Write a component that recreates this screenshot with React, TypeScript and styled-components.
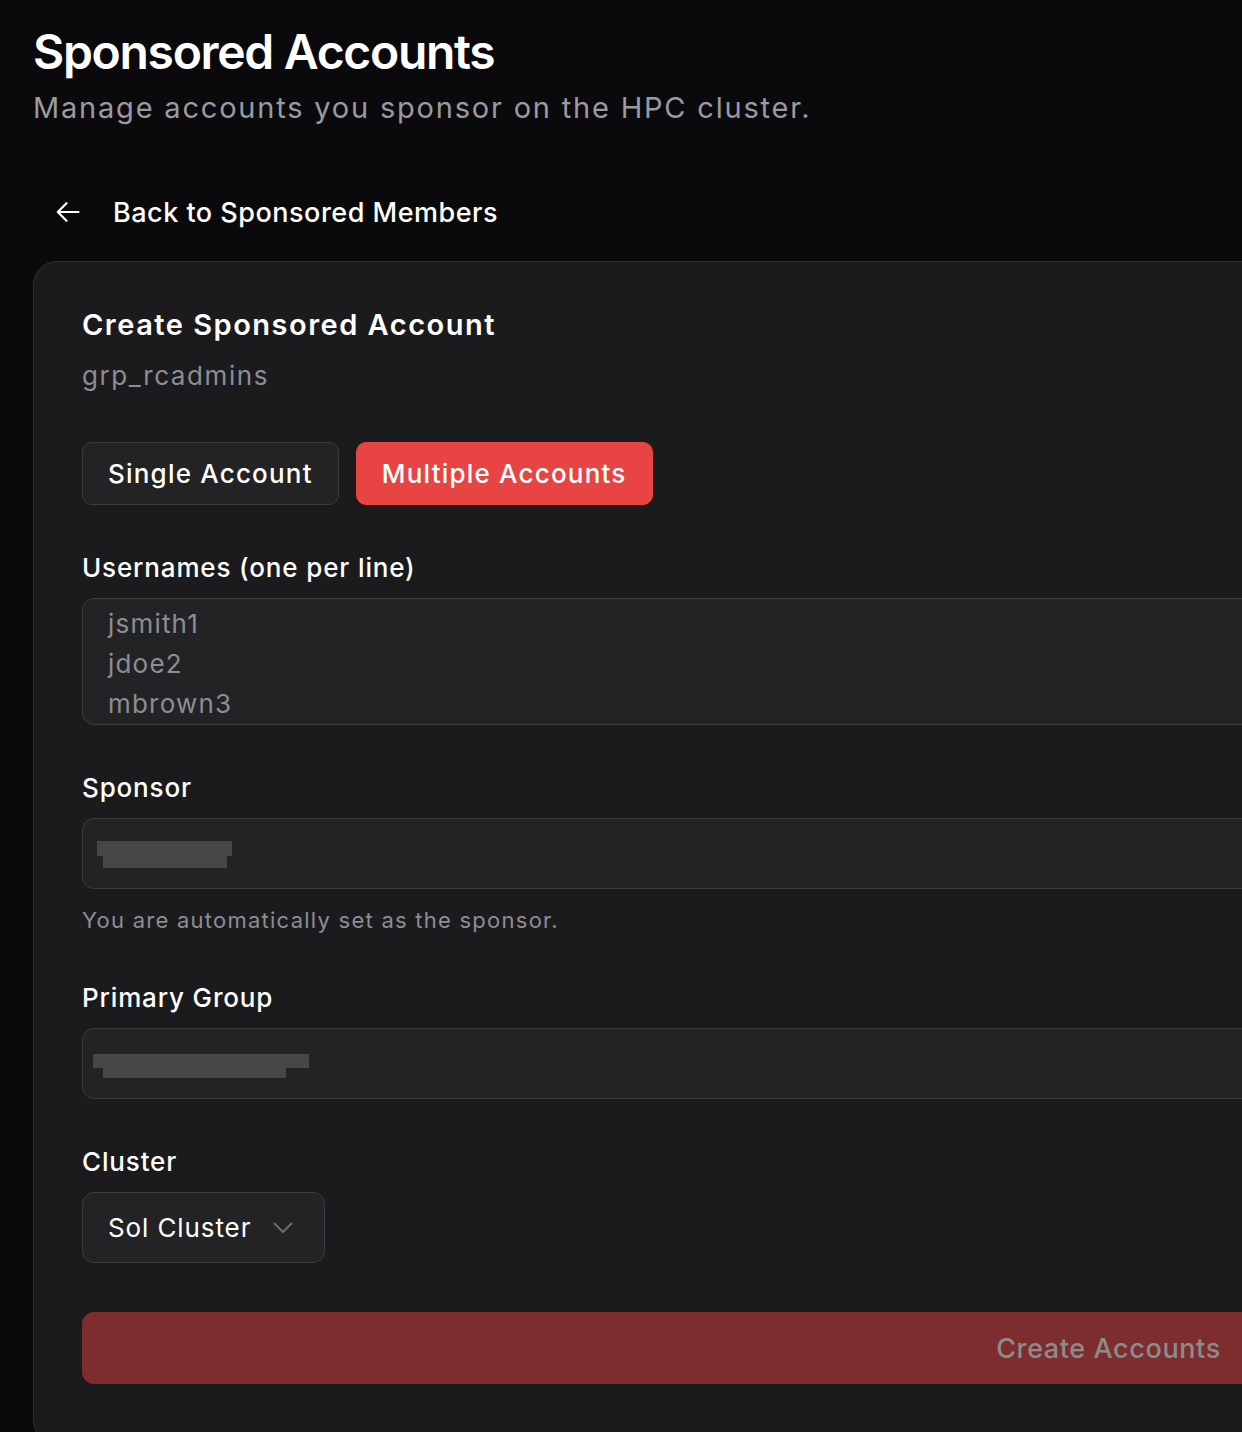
import React from "react";
import styled, { createGlobalStyle } from "styled-components";

const GlobalStyle = createGlobalStyle`
  html, body {
    margin: 0;
    padding: 0;
    background: #0a0a0c;
    overflow: hidden;
  }
  body {
    font-family: Inter, "Noto Sans", "Liberation Sans", sans-serif;
    color: #f4f4f5;
  }
  * { box-sizing: border-box; }
`;

const Page = styled.div`
  width: 2217px;
  min-height: 1432px;
  padding: 23px 33px 40px;
  display: flex;
  flex-direction: column;
`;

const Title = styled.h1`
  margin: 0;
  font-size: 48px;
  line-height: 58px;
  font-weight: 600;
  letter-spacing: -1.3px;
  color: #ffffff;
`;

const Subtitle = styled.p`
  margin: 8px 0 0;
  font-size: 29px;
  line-height: 38px;
  font-weight: 400;
  letter-spacing: 1.8px;
  color: #9a9aa0;
`;

const BackLink = styled.a`
  margin: 67px 0 0 23px;
  display: flex;
  align-items: center;
  gap: 33px;
  height: 36px;
  font-size: 27px;
  font-weight: 500;
  letter-spacing: 0.5px;
  color: #ffffff;
  text-decoration: none;
  cursor: pointer;
`;

const Card = styled.section`
  margin-top: 31px;
  background: #1b1b1e;
  border: 1px solid #2e2e31;
  border-radius: 24px;
  padding: 45px 48px 60px;
  display: flex;
  flex-direction: column;
`;

const CardTitle = styled.h2`
  margin: 0;
  font-size: 29px;
  line-height: 35px;
  font-weight: 600;
  letter-spacing: 1.5px;
  color: #ffffff;
`;

const CardSub = styled.p`
  margin: 16px 0 0;
  font-size: 26px;
  line-height: 36px;
  letter-spacing: 1.6px;
  color: #8d8d93;
`;

const ToggleRow = styled.div`
  margin-top: 48px;
  display: flex;
  gap: 17px;
`;

const ToggleButton = styled.button<{ $active?: boolean }>`
  height: 63px;
  padding: 0 25px;
  border-radius: 10px;
  font-family: inherit;
  font-size: 26px;
  font-weight: 500;
  letter-spacing: 1.2px;
  cursor: pointer;
  color: #ffffff;
  background: ${(p) => (p.$active ? "#e84443" : "#232326")};
  border: 1.5px solid ${(p) => (p.$active ? "#e84443" : "#3c3c40")};
`;

const Field = styled.div<{ $top?: number }>`
  margin-top: ${(p) => p.$top ?? 45}px;
  display: flex;
  flex-direction: column;
`;

const Label = styled.label`
  font-size: 26px;
  line-height: 36px;
  font-weight: 500;
  letter-spacing: 0.85px;
  color: #ffffff;
  margin-bottom: 12px;
`;

const TextArea = styled.textarea`
  height: 127px;
  padding: 5px 25px 0;
  border-radius: 12px;
  border: 1.5px solid #3c3c40;
  background: #232326;
  color: #ffffff;
  font-family: inherit;
  font-size: 26px;
  line-height: 40px;
  letter-spacing: 1.2px;
  resize: none;
  overflow: hidden;
  outline: none;
  &::placeholder {
    color: #8d8d93;
  }
`;

const InputBox = styled.div<{ $padTop: number; $padLeft: number }>`
  height: 71px;
  border-radius: 12px;
  border: 1.5px solid #3c3c40;
  background: #232326;
  padding: ${(p) => `${p.$padTop}px 0 0 ${p.$padLeft}px`};
  display: flex;
  flex-direction: column;
  align-items: flex-start;
`;

const RedactBar = styled.div<{ $w: number; $h: number; $indent?: number }>`
  width: ${(p) => p.$w}px;
  height: ${(p) => p.$h}px;
  margin-left: ${(p) => p.$indent ?? 0}px;
  background: #474749;
`;

const Helper = styled.p`
  margin: 16px 0 0;
  font-size: 22px;
  line-height: 30px;
  letter-spacing: 1.25px;
  color: #8d8d93;
`;

const Select = styled.button`
  align-self: flex-start;
  width: 243px;
  height: 71px;
  padding: 0 31px 0 25px;
  border-radius: 12px;
  border: 1.5px solid #3c3c40;
  background: #232326;
  color: #ffffff;
  font-family: inherit;
  font-size: 26px;
  letter-spacing: 0.9px;
  display: flex;
  align-items: center;
  justify-content: space-between;
  cursor: pointer;
`;

const SubmitButton = styled.button`
  margin-top: 49px;
  height: 72px;
  width: 100%;
  border: none;
  border-radius: 12px;
  background: #7e2d2f;
  color: #8c8c8c;
  font-family: inherit;
  font-size: 27px;
  font-weight: 500;
  letter-spacing: 0.6px;
  cursor: not-allowed;
`;

export default function App() {
  return (
    <>
      <GlobalStyle />
      <Page>
        <Title>Sponsored Accounts</Title>
        <Subtitle>Manage accounts you sponsor on the HPC cluster.</Subtitle>
        <BackLink>
          <svg width="24" height="22" viewBox="0 0 24 22" fill="none">
            <path
              d="M22.5 11H1.8M10.5 2.2 1.8 11l8.7 8.8"
              stroke="#ffffff"
              strokeWidth="2.2"
              strokeLinecap="round"
              strokeLinejoin="round"
            />
          </svg>
          Back to Sponsored Members
        </BackLink>
        <Card>
          <CardTitle>Create Sponsored Account</CardTitle>
          <CardSub>grp_rcadmins</CardSub>
          <ToggleRow>
            <ToggleButton>Single Account</ToggleButton>
            <ToggleButton $active>Multiple Accounts</ToggleButton>
          </ToggleRow>
          <Field>
            <Label>Usernames (one per line)</Label>
            <TextArea placeholder={"jsmith1\njdoe2\nmbrown3"} />
          </Field>
          <Field>
            <Label>Sponsor</Label>
            <InputBox $padTop={22} $padLeft={14}>
              <RedactBar $w={135} $h={15} />
              <RedactBar $w={124} $h={12} $indent={6} />
            </InputBox>
            <Helper>You are automatically set as the sponsor.</Helper>
          </Field>
          <Field>
            <Label>Primary Group</Label>
            <InputBox $padTop={25} $padLeft={10}>
              <RedactBar $w={216} $h={14} />
              <RedactBar $w={183} $h={10} $indent={10} />
            </InputBox>
          </Field>
          <Field>
            <Label>Cluster</Label>
            <Select>
              Sol Cluster
              <svg width="20" height="12" viewBox="0 0 20 12" fill="none">
                <path
                  d="M1.5 1.5 10 10l8.5-8.5"
                  stroke="#6c6c71"
                  strokeWidth="2"
                  strokeLinecap="round"
                  strokeLinejoin="round"
                />
              </svg>
            </Select>
          </Field>
          <SubmitButton disabled>Create Accounts</SubmitButton>
        </Card>
      </Page>
    </>
  );
}
